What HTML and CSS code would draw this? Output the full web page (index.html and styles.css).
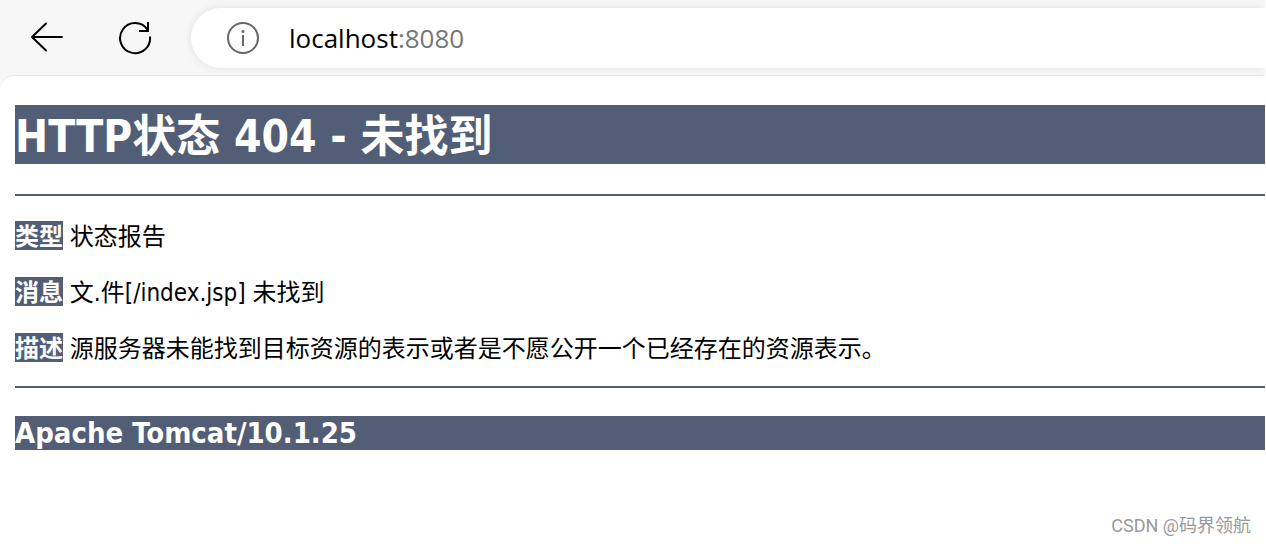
FILE: index.html
```html
<!DOCTYPE html>
<html lang="zh-CN">
<head>
<meta charset="utf-8">
<title>HTTP状态 404 - 未找到</title>
<link rel="stylesheet" href="styles.css">
</head>
<body>
<header class="toolbar">
  <button class="tool" type="button" aria-label="Back">
    <svg width="34" height="34" viewBox="0 0 34 34" fill="none" stroke="#000" stroke-width="2" stroke-linecap="round" stroke-linejoin="round"><path d="M32 16H2M16 2.500 2 16l14 13.500"/></svg>
  </button>
  <button class="tool" type="button" aria-label="Reload">
    <svg width="34" height="34" viewBox="0 0 34 34" fill="none" stroke="#000" stroke-width="2"><path d="M32 15.500A15 15 0 1 1 29.500 8.700M30 1v9H21"/></svg>
  </button>
  <div class="address">
    <svg width="34" height="34" viewBox="0 0 34 34" fill="none" stroke="#666" stroke-width="2"><circle cx="17" cy="17" r="15"/><path d="M17 14v11"/><circle cx="17" cy="10.500" r="1.500" fill="#666" stroke="none"/></svg>
    <span class="url">localhost<span class="port">:8080</span></span>
  </div>
</header>
<main class="page">
  <h1 class="title">HTTP状态 404 - 未找到</h1>
  <hr class="line">
  <div class="details">
    <p class="detail"><b class="label">类型</b> 状态报告</p>
    <p class="detail"><b class="label">消息</b> 文.件[/index.jsp] 未找到</p>
    <p class="detail"><b class="label">描述</b> 源服务器未能找到目标资源的表示或者是不愿公开一个已经存在的资源表示。</p>
  </div>
  <hr class="line">
  <h3 class="server">Apache Tomcat/10.1.25</h3>
  <footer class="credit">CSDN @码界领航</footer>
</main>
</body>
</html>
```
FILE: styles.css
```css
* { box-sizing: border-box; }

body {
  display: flex;
  flex-direction: column;
  min-height: 100vh;
  margin: 0;
  border-right: 1px solid #fff;
  background: #f7f7f7;
  color: #000;
  font-family: "DejaVu Sans Condensed", "Noto Sans CJK SC", sans-serif;
}

.toolbar {
  display: flex;
  align-items: center;
  padding: 8px 0 7px 30px;
  overflow: hidden;
}

.tool {
  display: flex;
  margin-right: 54px;
  padding: 0;
  border: 0;
  background: none;
}

.tool + .tool { margin-right: 39px; }

.address {
  display: flex;
  flex: 1;
  align-items: center;
  gap: 29px;
  height: 60px;
  padding-left: 35px;
  border-radius: 30px 0 0 30px;
  background: #fff;
  box-shadow: 0 0 10px rgba(0, 0, 0, 0.1);
}

.url {
  font-family: "Open Sans", sans-serif;
  font-size: 26px;
  line-height: 36px;
}

.port { color: #767676; }

.page {
  display: flex;
  flex: 1;
  flex-direction: column;
  padding: 29px 0 5px 15px;
  border-top: 1px solid #e6e6e6;
  border-top-left-radius: 15px;
  background: #fff;
}

.title,
.server {
  margin: 0;
  background: #525d76;
  color: #fff;
  font-weight: bold;
}

.title {
  padding-top: 4px;
  font-size: 44px;
  line-height: 55px;
}

.line {
  width: 100%;
  height: 2px;
  margin: 30px 0 0;
  border: 0;
  background: #525d76;
}

.details {
  display: flex;
  flex-direction: column;
  gap: 27px;
  padding: 25px 0 0;
}

.detail {
  margin: 0;
  font-size: 24px;
  line-height: 25px;
}

.label {
  display: inline-block;
  padding-top: 4px;
  background: #525d76;
  color: #fff;
}

.details + .line { margin: 24px 0 28px; }

.server {
  font-size: 29px;
  line-height: 34px;
}

.credit {
  margin-top: auto;
  padding-right: 14px;
  color: #999;
  font-family: Roboto, "Noto Sans CJK SC", sans-serif;
  font-size: 18px;
  line-height: 26px;
  text-align: right;
}
```
